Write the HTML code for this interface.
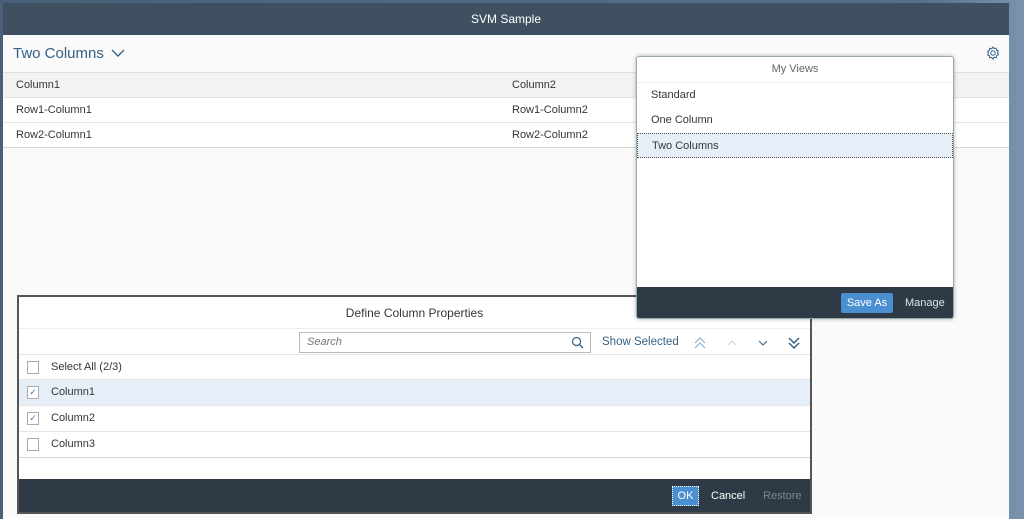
<!DOCTYPE html>
<html><head><meta charset="utf-8"><style>
*{box-sizing:border-box;margin:0;padding:0}
body{width:1024px;height:519px;overflow:hidden;position:relative;font-family:"Liberation Sans",sans-serif;font-size:11px;color:#32363a;background:linear-gradient(90deg,#4a6079 0%,#55708d 90%,#7a93ad 100%)}
.abs{position:absolute}
.title{left:3px;top:3px;width:1006px;height:32px;background:#3f5161;color:#fff;font-size:12px;text-align:center;line-height:32px}
.main{left:3px;top:35px;width:1006px;height:484px;background:#fafafa}
.row{position:absolute;left:0;width:1006px;border-bottom:1px solid #e5e5e5;background:#fff}
.row span{position:absolute;top:0}
.pop{left:636px;top:56px;width:318px;height:263px;background:#fff;border:1px solid #9aa;border-radius:3px;box-shadow:0 0 4px rgba(0,0,0,.3);overflow:hidden;z-index:5}
.item{position:absolute;left:0;width:316px;height:25px;line-height:25px;padding-left:14px}
.dlg{left:17px;top:295px;width:795px;height:219px;background:#fff;border:2px solid #555}
.li{position:absolute;left:0;width:791px;height:26px;border-bottom:1px solid #e5e5e5;line-height:25px}
.cb{position:absolute;left:8px;top:6px;width:12px;height:13px;border:1px solid #aaa;background:#fff;color:#3a7ab5;font-size:9px;line-height:11px;text-align:center}
.li span{position:absolute;left:32px}
</style></head><body>
<div class="abs title">SVM Sample</div>
<div class="abs main">
 <div class="abs" style="left:10px;top:10px;font-size:15px;color:#346187">Two Columns <svg width="14" height="10" viewBox="0 0 14 10" style="margin-left:3px"><path d="M1 2l6 6 6-6" stroke="#346187" fill="none" stroke-width="1.4"/></svg></div>
 <svg class="abs" style="left:983px;top:11px" width="14" height="14" viewBox="0 0 14 14"><circle cx="7" cy="7" r="2.2" stroke="#346187" fill="none"/><path d="M7 1l1.2 1.6 2-.5.3 2 1.9.9-.9 1.9.9 1.9-1.9.9-.3 2-2-.5L7 13l-1.2-1.6-2 .5-.3-2-1.9-.9.9-1.9-.9-1.9 1.9-.9.3-2 2 .5z" stroke="#346187" fill="none"/></svg>
 <div class="row" style="top:37px;height:26px;background:#f3f3f3;border-top:1px solid #e0e0e0;line-height:25px"><span style="left:13px">Column1</span><span style="left:509px">Column2</span></div>
 <div class="row" style="top:63px;height:25px;line-height:24px"><span style="left:13px">Row1-Column1</span><span style="left:509px">Row1-Column2</span></div>
 <div class="row" style="top:88px;height:25px;line-height:24px;border-bottom:1px solid #d5d5d5"><span style="left:13px">Row2-Column1</span><span style="left:509px">Row2-Column2</span></div>
</div>
<div class="abs pop">
 <div class="item" style="top:0;text-align:center;padding:0;color:#666;border-bottom:1px solid #eee;height:26px">My Views</div>
 <div class="item" style="top:26px">Standard</div>
 <div class="item" style="top:51px">One Column</div>
 <div class="item" style="top:76px;background:#e6eef7;border:1px dotted #555">Two Columns</div>
 <div class="abs" style="left:0;top:230px;width:318px;height:33px;background:#2e3b47"></div>
 <div class="abs" style="left:204px;top:236px;width:52px;height:20px;background:#4a8fd0;color:#fff;text-align:center;line-height:20px;border-radius:2px">Save As</div>
 <div class="abs" style="left:268px;top:236px;color:#d8e6f3;line-height:20px">Manage</div>
</div>
<div class="abs dlg">
 <div class="abs" style="left:0;top:0;width:791px;height:32px;text-align:center;line-height:32px;font-size:12px;border-bottom:1px solid #eee">Define Column Properties</div>
 <div class="abs" style="left:280px;top:35px;width:292px;height:21px;border:1px solid #bbb;font-style:italic;color:#777;padding-left:7px;line-height:19px">Search
  <svg style="position:absolute;right:6px;top:3px" width="13" height="13" viewBox="0 0 13 13"><circle cx="5.5" cy="5.5" r="4" stroke="#346187" fill="none" stroke-width="1.2"/><path d="M8.5 8.5l3.5 3.5" stroke="#346187" stroke-width="1.3"/></svg></div>
 <div class="abs" style="left:583px;top:39px;color:#346187;font-size:11.5px">Show Selected</div>
 <svg class="abs" style="left:673px;top:38px" width="120" height="16" viewBox="0 0 120 16"><path d="M3 8l5-5 5 5M3 13l5-5 5 5" stroke="#8ab0d4" fill="none" stroke-width="1.2"/><path d="M36 10l4-4 4 4" stroke="#c8d4de" fill="none"/><path d="M67 6l4 4 4-4" stroke="#346187" fill="none"/><path d="M97 3l5 5 5-5M97 8l5 5 5-5" stroke="#346187" fill="none" stroke-width="1.5"/></svg>
 <div class="li" style="top:57px;border-top:1px solid #e5e5e5"><div class="cb"></div><span>Select All (2/3)</span></div>
 <div class="li" style="top:83px;background:#e6eef7"><div class="cb">✓</div><span>Column1</span></div>
 <div class="li" style="top:109px"><div class="cb">✓</div><span>Column2</span></div>
 <div class="li" style="top:135px;border-bottom:1px solid #d5d5d5"><div class="cb"></div><span>Column3</span></div>
 <div class="abs" style="left:0;top:182px;width:791px;height:33px;background:#2e3b47"></div>
 <div class="abs" style="left:653px;top:189px;width:27px;height:20px;background:#4a8fd0;color:#fff;text-align:center;line-height:18px;border:1px dotted #fff">OK</div>
 <div class="abs" style="left:692px;top:189px;color:#fff;line-height:20px">Cancel</div>
 <div class="abs" style="left:744px;top:189px;color:#7a8793;line-height:20px">Restore</div>
</div>
</body></html>
